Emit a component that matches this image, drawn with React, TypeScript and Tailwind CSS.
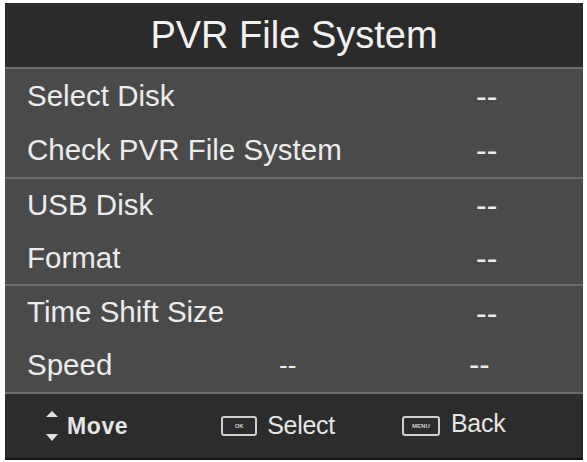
const font = { fontFamily: '"Liberation Sans", Arial, sans-serif' };

type Row = { label: string; mid?: string; value: string };

const groups: Row[][] = [
  [
    { label: "Select Disk", value: "--" },
    { label: "Check PVR File System", value: "--" },
  ],
  [
    { label: "USB Disk", value: "--" },
    { label: "Format", value: "--" },
  ],
  [
    { label: "Time Shift Size", value: "--" },
    { label: "Speed", mid: "--", value: "--" },
  ],
];

const groupHeights = ["h-[108px]", "h-[105px]", "h-[106px]"];

function MenuRow({ row }: { row: Row }) {
  return (
    <div className="flex flex-1 items-center pl-[22px] text-[29.5px] text-[#ececec]">
      {row.mid ? (
        <>
          <span className="w-[252px] shrink-0">{row.label}</span>
          <span className="w-[190px] shrink-0 text-[26px]">{row.mid}</span>
          <span className="text-[31px]">{row.value}</span>
        </>
      ) : (
        <>
          <span className="w-[449px] shrink-0">{row.label}</span>
          <span className="text-[32px]">{row.value}</span>
        </>
      )}
    </div>
  );
}

function KeyIcon({ text, width }: { text: string; width: string }) {
  return (
    <span
      className={`flex h-[20px] ${width} items-center justify-center rounded-[3px] border-2 border-[#cfcfcf] text-[6px] font-bold leading-none text-[#cfcfcf]`}
    >
      {text}
    </span>
  );
}

export default function App() {
  return (
    <div className="h-[462px] w-[587px] bg-white pl-[5px] pt-[3px]" style={font}>
      <div className="flex h-[457px] w-[578px] flex-col bg-[#4a4a4a]">
        <div className="flex h-[64px] shrink-0 items-center justify-center bg-[#2b2b2b] text-[38px] text-[#f2f2f2]">
          PVR File System
        </div>

        {groups.map((group, i) => (
          <div key={i} className="flex flex-col">
            <div className="h-[2px] bg-[#6c6c6c]" />
            <div className={`flex flex-col ${groupHeights[i]}`}>
              {group.map((row) => (
                <MenuRow key={row.label} row={row} />
              ))}
            </div>
          </div>
        ))}

        <div className="h-[2px] bg-[#6c6c6c]" />
        <div className="flex flex-1 items-center bg-[#2c2c2c] text-[#e6e6e6]">
          <div className="ml-[40px] flex items-center gap-[8px]">
            <svg width="14" height="32" viewBox="0 0 14 32">
              <path d="M7 1 L13 7 L1 7 Z" fill="#e0e0e0" />
              <path d="M7 31 L13 24 L1 24 Z" fill="#e0e0e0" />
            </svg>
            <span className="text-[23px] font-bold tracking-[0.6px]">Move</span>
          </div>
          <div className="ml-[93px] flex items-center gap-[10px]">
            <KeyIcon text="OK" width="w-[36px]" />
            <span className="text-[25px] tracking-[-0.3px]">Select</span>
          </div>
          <div className="ml-[67px] flex items-center gap-[11px]">
            <KeyIcon text="MENU" width="w-[38px]" />
            <span className="-mt-[5px] text-[25px] tracking-[-0.2px]">Back</span>
          </div>
        </div>
        <div className="h-[2px] bg-[#111111]" />
      </div>
    </div>
  );
}
